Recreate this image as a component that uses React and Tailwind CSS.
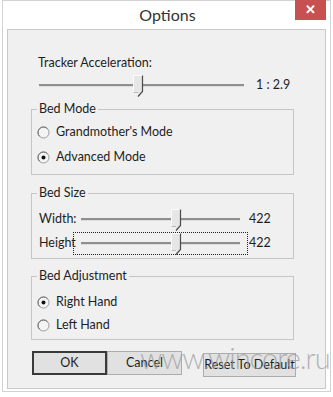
import React from "react";

const FONT = { fontFamily: 'Lato, "Open Sans", sans-serif' };

function Thumb() {
  return (
    <svg width="11" height="23" viewBox="0 0 11 23" className="block">
      <path d="M0.5 0.5 H9.5 V16.5 L5 22 V17.5 H0.5 Z" fill="#e6e6e6" stroke="none" />
      <path d="M0.5 17.5 V0.5 H9.5" fill="none" stroke="#fbfbfb" strokeWidth="1" />
      <path d="M9.5 0.5 V16.5 L5 21.5" fill="none" stroke="#4a4a4a" strokeWidth="1.2" />
      <path d="M0.5 17.5 H5" fill="none" stroke="#bdbdbd" strokeWidth="1" />
    </svg>
  );
}

function Slider({ width, frac, focus }) {
  const inner = width - 16;
  return (
    <div
      className={`relative h-[23px] shrink-0 ${focus ? "border border-dotted border-[#222]" : "border border-transparent"}`}
      style={{ width }}
    >
      <div className="absolute left-[7px] right-[7px] top-[9px] h-[3px] border-t-2 border-[#8f8f8f] bg-[#dcdcdc]" />
      <div className="absolute top-[0px]" style={{ left: 7 + Math.round(inner * frac) - 5 }}>
        <Thumb />
      </div>
    </div>
  );
}

function Radio({ checked, label }) {
  return (
    <div className="flex h-[20px] items-center">
      <svg width="13" height="13" viewBox="0 0 13 13" className="ml-[5px] mr-[6px] block">
        <circle cx="6.5" cy="6.5" r="5.5" fill="#f4f4f4" stroke="#9a9a9a" />
        <path d="M2.6 10.4 A5.5 5.5 0 0 1 10.4 2.6" fill="none" stroke="#6d6d6d" />
        {checked && <circle cx="6.5" cy="6.5" r="2" fill="#111" />}
      </svg>
      <span className="text-[12.5px] text-[#1e1e1e]">{label}</span>
    </div>
  );
}

function Group({ title, children, pad }) {
  return (
    <fieldset className={`ml-[23px] w-[263px] border border-[#c6c6c6] px-0 ${pad}`}>
      <legend className="ml-[5px] px-[2px] text-[12.5px] leading-[16px] text-[#1e1e1e]">{title}</legend>
      {children}
    </fieldset>
  );
}

function Button({ children, w, dark }) {
  return (
    <button
      className={`h-[24px] whitespace-nowrap ${w} bg-[#e1e1e1] text-[12.5px] text-[#1e1e1e] ${dark ? "border-2 border-[#3a3a3a]" : "border border-[#adadad]"}`}
    >
      {children}
    </button>
  );
}

export default function App() {
  return (
    <div className="h-[397px] w-[333px] overflow-hidden bg-white" style={FONT}>
      <div className="relative ml-[2px] h-[392px] w-[329px] border border-[#d2d2d2] bg-white">
        {/* title bar */}
        <div className="flex h-[28px] items-center justify-center pl-[2px] text-[16px] text-[#333]">
          Options
        </div>
        <div className="absolute right-[4px] top-[-1px] flex h-[20px] w-[31px] items-center justify-center bg-[#c75050] text-[13px] font-bold text-white">
          ✕
        </div>

        {/* client area */}
        <div className="mx-[4px] h-[360px] border border-[#c9c9c9] bg-[#f0f0f0] text-[#1e1e1e]">
          <div className="ml-[30px] mt-[25px] h-[16px] text-[12.5px] leading-[16px]">Tracker Acceleration:</div>
          <div className="ml-[23px] mt-[3px] flex items-center">
            <Slider width={221} frac={0.485} />
            <span className="ml-[4px] text-[12.5px]">1 : 2.9</span>
          </div>

          <div className="mt-[4px]">
            <Group title="Bed Mode" pad="pt-[5px] pb-[7px]">
              <div className="flex flex-col gap-[5px]">
                <Radio label="Grandmother's Mode" />
                <Radio checked label="Advanced Mode" />
              </div>
            </Group>
          </div>

          <div className="mt-[10px]">
            <Group title="Bed Size" pad="pt-[7px] pb-[3px]">
              <div className="flex flex-col gap-[1px]">
                <div className="flex h-[23px] items-center">
                  <span className="ml-[7px] w-[34px] text-[12.5px]">Width:</span>
                  <Slider width={175} frac={0.6} />
                  <span className="ml-[1px] text-[12.5px]">422</span>
                </div>
                <div className="flex h-[23px] items-center">
                  <span className="ml-[7px] w-[34px] text-[12.5px]">Height</span>
                  <Slider width={175} frac={0.6} focus />
                  <span className="ml-[1px] text-[12.5px]">422</span>
                </div>
              </div>
            </Group>
          </div>

          <div className="mt-[9px]">
            <Group title="Bed Adjustment" pad="pt-[8px] pb-[4px]">
              <div className="flex flex-col gap-[3px]">
                <Radio checked label="Right Hand" />
                <Radio label="Left Hand" />
              </div>
            </Group>
          </div>

          <div className="relative ml-[24px] mt-[11px] flex">
            <Button w="w-[75px]" dark>OK</Button>
            <Button w="w-[75px]">Cancel</Button>
            <div className="ml-[21px]">
              <Button w="w-[93px]">Reset To Default</Button>
            </div>
            <div className="pointer-events-none absolute left-[108px] top-[-8px] whitespace-nowrap text-[29px] font-light leading-none tracking-[-1px] text-[#9c9c9c]/75">
              www.wincore.ru
            </div>
          </div>
        </div>
      </div>
    </div>
  );
}
